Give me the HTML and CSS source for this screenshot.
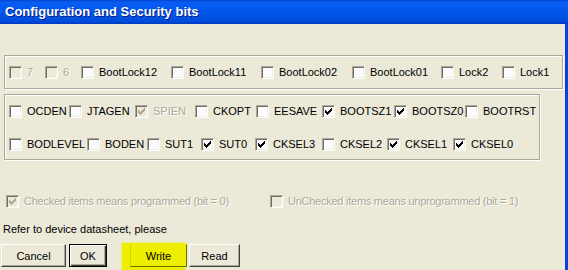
FILE: index.html
```html
<!DOCTYPE html>
<html lang="en">
<head>
  <meta charset="UTF-8" />
  <title>Configuration and Security bits</title>
  <link rel="stylesheet" href="styles.css">
</head>
<body>
  <svg class="defs" aria-hidden="true">
    <symbol id="tick" viewBox="0 0 11 11">
      <rect x="2" y="4" width="1" height="3"/>
      <rect x="3" y="5" width="1" height="3"/>
      <rect x="4" y="6" width="1" height="3"/>
      <rect x="5" y="5" width="1" height="3"/>
      <rect x="6" y="4" width="1" height="3"/>
      <rect x="7" y="3" width="1" height="3"/>
      <rect x="8" y="2" width="1" height="3"/>
    </symbol>
  </svg>

  <div class="window">
    <div class="titlebar">Configuration and Security bits</div>

    <div class="client">
      <div class="group lock">
        <div class="row r1">
          <label class="cb off"><span class="box"></span>7</label>
          <label class="cb off"><span class="box"></span>6</label>
          <label class="cb"><span class="box"></span>BootLock12</label>
          <label class="cb"><span class="box"></span>BootLock11</label>
          <label class="cb"><span class="box"></span>BootLock02</label>
          <label class="cb"><span class="box"></span>BootLock01</label>
          <label class="cb"><span class="box"></span>Lock2</label>
          <label class="cb"><span class="box"></span>Lock1</label>
        </div>
      </div>

      <div class="group fuses">
        <div class="row r2">
          <label class="cb"><span class="box"></span>OCDEN</label>
          <label class="cb"><span class="box"></span>JTAGEN</label>
          <label class="cb off"><span class="box"><svg class="tick"><use href="#tick"/></svg></span>SPIEN</label>
          <label class="cb"><span class="box"></span>CKOPT</label>
          <label class="cb"><span class="box"></span>EESAVE</label>
          <label class="cb"><span class="box"><svg class="tick"><use href="#tick"/></svg></span>BOOTSZ1</label>
          <label class="cb"><span class="box"><svg class="tick"><use href="#tick"/></svg></span>BOOTSZ0</label>
          <label class="cb"><span class="box"></span>BOOTRST</label>
        </div>
        <div class="row r3">
          <label class="cb"><span class="box"></span>BODLEVEL</label>
          <label class="cb"><span class="box"></span>BODEN</label>
          <label class="cb"><span class="box"></span>SUT1</label>
          <label class="cb"><span class="box"><svg class="tick"><use href="#tick"/></svg></span>SUT0</label>
          <label class="cb"><span class="box"><svg class="tick"><use href="#tick"/></svg></span>CKSEL3</label>
          <label class="cb"><span class="box"></span>CKSEL2</label>
          <label class="cb"><span class="box"><svg class="tick"><use href="#tick"/></svg></span>CKSEL1</label>
          <label class="cb"><span class="box"><svg class="tick"><use href="#tick"/></svg></span>CKSEL0</label>
        </div>
      </div>

      <div class="legend">
        <label class="cb off"><span class="box"><svg class="tick"><use href="#tick"/></svg></span>Checked items means programmed (bit = 0)</label>
        <label class="cb off"><span class="box"></span>UnChecked items means unprogrammed (bit = 1)</label>
      </div>

      <p class="note">Refer to device datasheet, please</p>

      <div class="buttons">
        <button class="btn cancel">Cancel</button>
        <button class="btn ok">OK</button>
        <span class="marker"><button class="btn write">Write</button></span>
        <button class="btn read">Read</button>
      </div>
    </div>
  </div>
</body>
</html>
```

FILE: styles.css
```css
body {
  margin: 0;
  font-family: "Liberation Sans", Arial, sans-serif;
  font-size: 11px;
  color: #000;
}

.defs {
  position: absolute;
  width: 0;
  height: 0;
}

.window {
  width: 568px;
  height: 270px;
  background: #ece9d8;
  display: flex;
  flex-direction: column;
  overflow: hidden;
}

.titlebar {
  height: 24px;
  line-height: 24px;
  padding-left: 5px;
  color: #fff;
  font-weight: bold;
  font-size: 13px;
  text-shadow: 1px 1px #0a1883;
  background: linear-gradient(#0044d2 0, #0a5cf0 2px, #065bf2 6px, #0055e8 12px, #0052e2 18px, #0049d8 22px, #0038c0 24px);
}

.client {
  flex: 1;
  padding: 31px 2px 0 4px;
  border-right: 3px solid #0a3fe0;
}

.group {
  border: 1px solid #aca899;
  box-shadow: inset 1px 1px #fff, 1px 1px #fff;
  padding: 0 4px;
}

.lock {
  height: 34px;
  box-sizing: border-box;
  padding-top: 10px;
}

.fuses {
  width: 536px;
  height: 66px;
  box-sizing: border-box;
  margin-top: 5px;
  padding-top: 10px;
}

.row {
  display: grid;
  height: 13px;
}

.r1 { grid-template-columns: 36px 36px 90px 90px 91px 89px 61px auto; }
.r2 { grid-template-columns: 60px 66px 60px 61px 66px 72px 71px auto; }
.r3 { grid-template-columns: 78px 60px 54px 54px 67px 65px 66px auto; margin-top: 20px; }

.cb {
  display: flex;
  align-items: center;
  gap: 5px;
  height: 13px;
  line-height: 13px;
  white-space: nowrap;
}

.box {
  width: 13px;
  height: 13px;
  box-sizing: border-box;
  flex: none;
  border: 1px solid;
  border-color: #aca899 #fff #fff #aca899;
  box-shadow: inset 1px 1px #716f64, inset -1px -1px #f1efe2;
  background: #fbfcff;
  color: #000;
}

.tick {
  display: block;
  width: 11px;
  height: 11px;
  fill: currentColor;
}

.off {
  color: #aca899;
  text-shadow: 1px 1px #fff;
}

.off .box {
  background: #ece9d8;
  color: #aca899;
}

.legend {
  display: grid;
  grid-template-columns: 264px auto;
  margin-top: 35px;
  padding-left: 2px;
  letter-spacing: -0.25px;
}

.note {
  margin: 15px 0 0 -1px;
  line-height: 13px;
}

.buttons {
  display: flex;
  align-items: flex-start;
  margin: 8px 0 0 -3px;
}

.btn {
  height: 23px;
  padding: 0;
  font-family: inherit;
  font-size: 11px;
  color: #000;
  background: #ece9d8;
  border: 1px solid;
  border-color: #fff #404040 #404040 #fff;
  box-shadow: inset -1px -1px #aca899;
}

.cancel { width: 65px; }

.ok {
  width: 38px;
  margin-left: 3px;
  border-color: #000;
  box-shadow: inset 1px 1px #fff, inset -1px -1px #404040, inset -2px -2px #aca899;
}

.marker {
  margin: -1px 0 0 15px;
  padding: 1px 0 3px 8px;
  background: #eeee00;
  box-shadow: 0 0 2px #eeee00;
}

.write {
  width: 57px;
  margin-right: -2px;
  background: #eeee00;
  border-color: #eeee00 #6e6e00 #6e6e00 #d4d400;
  box-shadow: none;
}

.read {
  width: 51px;
  margin-left: 4px;
}
```
